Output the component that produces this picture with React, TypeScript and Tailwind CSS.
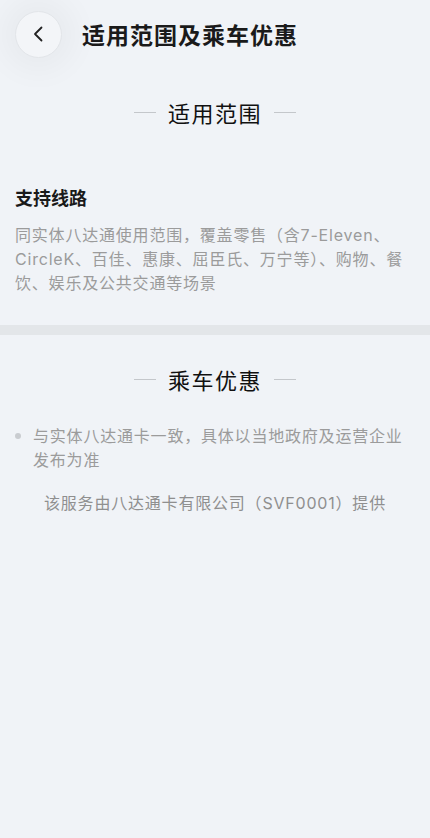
const font = "font-['Noto_Sans_CJK_SC','Noto_Sans',sans-serif]";
const body = "font-['Inter','Noto_Sans_CJK_SC',sans-serif] text-[16px] leading-[24px] tracking-[0.8px]";

function SectionTitle({ text }: { text: string }) {
  return (
    <div className="flex items-center justify-center gap-[12px]">
      <div className="h-px w-[22px] bg-[#c4c7cb]" />
      <div className="text-[22px] leading-[30px] text-[#111] tracking-[1.5px]">{text}</div>
      <div className="h-px w-[22px] bg-[#c4c7cb]" />
    </div>
  );
}

export default function App() {
  return (
    <div className={`${font} w-[430px] min-h-[838px] bg-[#f0f3f7]`}>
      {/* Header */}
      <div className="flex items-center h-[68px] pl-[15px]">
        <div className="w-[47px] h-[47px] rounded-full bg-[#f3f5f8] border border-[#e2e5e9] shadow-[0_0_30px_14px_rgba(0,0,0,0.035)] flex items-center justify-center">
          <svg width="20" height="20" viewBox="0 0 20 20" fill="none">
            <path d="M12.5 3.5 L6 10 L12.5 16.5" stroke="#222" strokeWidth="1.8" strokeLinecap="round" strokeLinejoin="round" />
          </svg>
        </div>
        <div className="ml-[20px] text-[23px] font-bold text-[#1a1a1a] tracking-[1px]">适用范围及乘车优惠</div>
      </div>

      {/* 适用范围 */}
      <div className="pt-[29px]">
        <SectionTitle text="适用范围" />
      </div>
      <div className="px-[15px] pt-[57px] pb-[30px]">
        <div className="text-[18px] leading-[26px] font-bold text-[#1a1a1a]">支持线路</div>
        <div className={`mt-[13px] ${body} text-[#9b9b9b]`}>
          同实体八达通使用范围，覆盖零售（含7-Eleven、CircleK、百佳、惠康、屈臣氏、万宁等）、购物、餐饮、娱乐及公共交通等场景
        </div>
      </div>

      <div className="h-[10px] bg-[#e3e6e9]" />

      {/* 乘车优惠 */}
      <div className="pt-[29px]">
        <SectionTitle text="乘车优惠" />
      </div>
      <div className="px-[15px] pt-[30px]">
        <div className="flex gap-[12px]">
          <div className="w-[6px] h-[6px] rounded-full bg-[#c9ccd0] mt-[9px] shrink-0" />
          <div className={`${body} text-[#9b9b9b]`}>
            与实体八达通卡一致，具体以当地政府及运营企业发布为准
          </div>
        </div>
        <div className={`mt-[19px] text-center ${body} text-[#8f8f8f]`}>
          该服务由八达通卡有限公司（SVF0001）提供
        </div>
      </div>
    </div>
  );
}
